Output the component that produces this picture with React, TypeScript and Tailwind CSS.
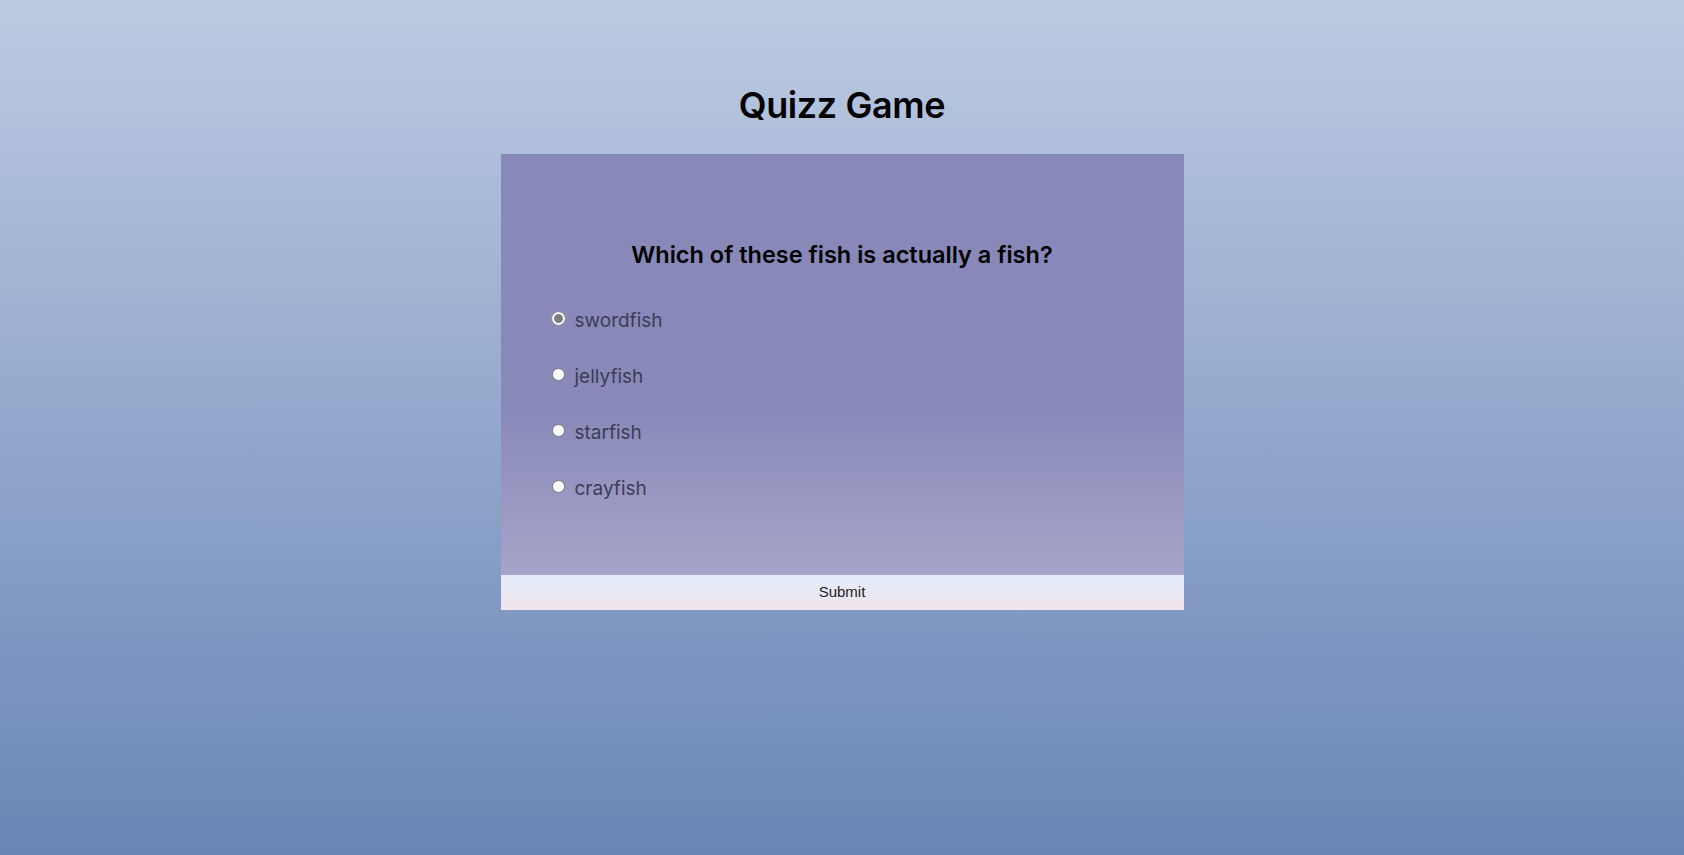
import React, { useState } from "react"

const answers = ["swordfish", "jellyfish", "starfish", "crayfish"]

export default function App() {
	const [picked, setPicked] = useState(0)

	return (
		<div className="min-h-screen w-full bg-gradient-to-b from-[#bdcbe2] to-[#6a85b6] font-['Inter','Noto_Sans',sans-serif]">
			<div className="flex flex-col items-center pt-[84px]">
				<h1 className="text-[36px] leading-[42px] font-semibold text-black tracking-[-0.4px]">Quizz Game</h1>
				<div className="mt-[28px] w-[683px] bg-[#8889b9]">
					<div className="bg-gradient-to-b from-[#8889b9] from-60% to-[#a5a4c9] pt-[85px] pb-[73px] px-[50px]">
						<h2 className="text-center text-[23.5px] leading-[32px] font-semibold text-black">
							Which of these fish is actually a fish?
						</h2>
						<ul className="mt-[35px] flex flex-col gap-[28px]">
							{answers.map((a, i) => (
								<li key={a} className="flex items-center h-[28px]">
									<input
										type="radio"
										name="answer"
										checked={picked === i}
										onChange={() => setPicked(i)}
										className={
											picked === i
												? "appearance-none w-[13px] h-[13px] mb-[3px] rounded-full bg-[#7d7d7d] border-[2.5px] border-white outline outline-1 outline-[#9a9a9a] ml-[1px]"
												: "appearance-none w-[13px] h-[13px] mb-[3px] rounded-full bg-white border border-[#767676] ml-[1px]"
										}
									/>
									<label className="ml-[10px] pt-[2px] text-[19px] text-[#3d3c57]">{a}</label>
								</li>
							))}
						</ul>
					</div>
					<button className="block w-full h-[35px] bg-gradient-to-b from-[#e3ebfb] to-[#f0e5ec] text-[15px] text-[#222] font-['Liberation_Sans',sans-serif]">
						Submit
					</button>
				</div>
			</div>
		</div>
	)
}
